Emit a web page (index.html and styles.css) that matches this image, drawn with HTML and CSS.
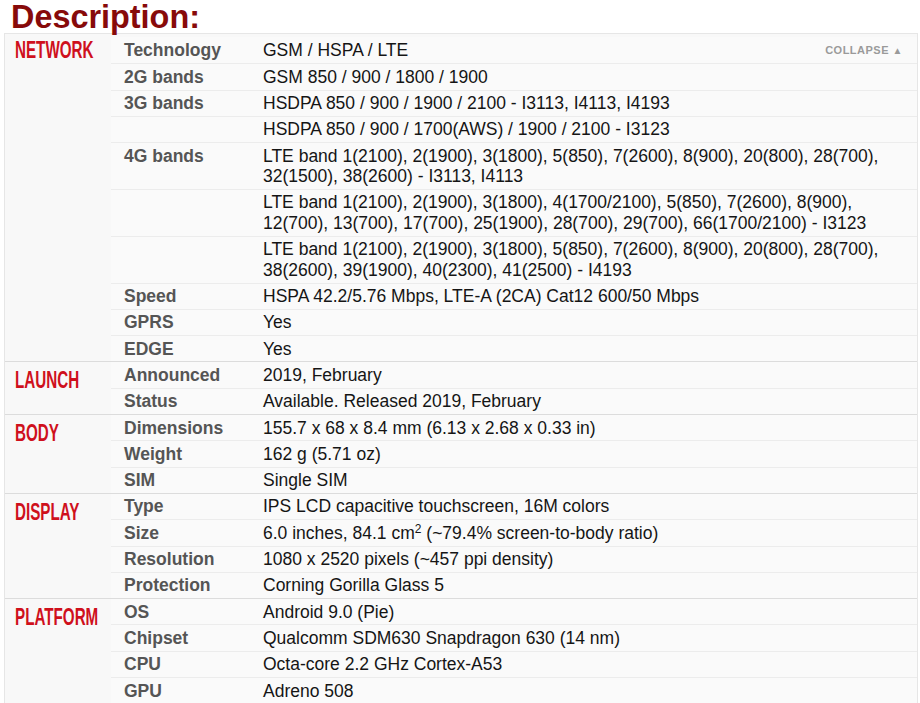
FILE: index.html
```html
<!DOCTYPE html>
<html>
<head>
<meta charset="utf-8">
<link rel="stylesheet" href="styles.css">
</head>
<body>
<h1 class="title">Description:</h1>
<div class="specs">
  <div class="group">
    <div class="group-name"><span>NETWORK</span></div>
    <div class="rows">
      <div class="row"><div class="label">Technology</div><div class="value">GSM / HSPA / LTE</div><div class="collapse">COLLAPSE <span class="tri">&#9650;</span></div></div>
      <div class="row"><div class="label">2G bands</div><div class="value">GSM 850 / 900 / 1800 / 1900</div></div>
      <div class="row"><div class="label">3G bands</div><div class="value">HSDPA 850 / 900 / 1900 / 2100 - I3113, I4113, I4193</div></div>
      <div class="row"><div class="label"></div><div class="value">HSDPA 850 / 900 / 1700(AWS) / 1900 / 2100 - I3123</div></div>
      <div class="row"><div class="label">4G bands</div><div class="value">LTE band 1(2100), 2(1900), 3(1800), 5(850), 7(2600), 8(900), 20(800), 28(700), 32(1500), 38(2600) - I3113, I4113</div></div>
      <div class="row"><div class="label"></div><div class="value">LTE band 1(2100), 2(1900), 3(1800), 4(1700/2100), 5(850), 7(2600), 8(900), 12(700), 13(700), 17(700), 25(1900), 28(700), 29(700), 66(1700/2100) - I3123</div></div>
      <div class="row"><div class="label"></div><div class="value">LTE band 1(2100), 2(1900), 3(1800), 5(850), 7(2600), 8(900), 20(800), 28(700), 38(2600), 39(1900), 40(2300), 41(2500) - I4193</div></div>
      <div class="row"><div class="label">Speed</div><div class="value">HSPA 42.2/5.76 Mbps, LTE-A (2CA) Cat12 600/50 Mbps</div></div>
      <div class="row"><div class="label">GPRS</div><div class="value">Yes</div></div>
      <div class="row"><div class="label">EDGE</div><div class="value">Yes</div></div>
    </div>
  </div>
  <div class="group">
    <div class="group-name"><span>LAUNCH</span></div>
    <div class="rows">
      <div class="row"><div class="label">Announced</div><div class="value">2019, February</div></div>
      <div class="row"><div class="label">Status</div><div class="value">Available. Released 2019, February</div></div>
    </div>
  </div>
  <div class="group">
    <div class="group-name"><span>BODY</span></div>
    <div class="rows">
      <div class="row"><div class="label">Dimensions</div><div class="value">155.7 x 68 x 8.4 mm (6.13 x 2.68 x 0.33 in)</div></div>
      <div class="row"><div class="label">Weight</div><div class="value">162 g (5.71 oz)</div></div>
      <div class="row"><div class="label">SIM</div><div class="value">Single SIM</div></div>
    </div>
  </div>
  <div class="group">
    <div class="group-name"><span>DISPLAY</span></div>
    <div class="rows">
      <div class="row"><div class="label">Type</div><div class="value">IPS LCD capacitive touchscreen, 16M colors</div></div>
      <div class="row"><div class="label">Size</div><div class="value">6.0 inches, 84.1 cm<sup>2</sup> (~79.4% screen-to-body ratio)</div></div>
      <div class="row"><div class="label">Resolution</div><div class="value">1080 x 2520 pixels (~457 ppi density)</div></div>
      <div class="row"><div class="label">Protection</div><div class="value">Corning Gorilla Glass 5</div></div>
    </div>
  </div>
  <div class="group">
    <div class="group-name"><span>PLATFORM</span></div>
    <div class="rows">
      <div class="row"><div class="label">OS</div><div class="value">Android 9.0 (Pie)</div></div>
      <div class="row"><div class="label">Chipset</div><div class="value">Qualcomm SDM630 Snapdragon 630 (14 nm)</div></div>
      <div class="row"><div class="label">CPU</div><div class="value">Octa-core 2.2 GHz Cortex-A53</div></div>
      <div class="row"><div class="label">GPU</div><div class="value">Adreno 508</div></div>
    </div>
  </div>
</div>
</body>
</html>
```
FILE: styles.css
```css
html, body {
  margin: 0;
  padding: 0;
  background: #ffffff;
}
body {
  font-family: "Liberation Sans", Arial, sans-serif;
  width: 920px;
  height: 703px;
  overflow: hidden;
}
.title {
  margin: 0;
  padding: 0 0 0 11px;
  height: 33px;
  font-size: 32.4px;
  line-height: 34px;
  font-weight: bold;
  color: #870a0a;
}
.specs {
  margin-left: 4px;
  width: 912px;
  border: 1px solid #e6e6e6;
  border-bottom: none;
  background: #f8f8f8;
  padding-top: 3px;
}
.group {
  display: flex;
  border-bottom: 1px solid #dcdcdc;
}
.group-name {
  width: 106px;
  flex: none;
  padding: 8px 0 0 10px;
  box-sizing: border-box;
  overflow: visible;
}
.group:first-child .group-name {
  padding-top: 2.5px;
}
.group-name span {
  display: inline-block;
  font-family: "Liberation Sans", Arial, sans-serif;
  font-weight: bold;
  font-size: 24.5px;
  line-height: 20px;
  color: #cf101c;
  white-space: nowrap;
  transform: scaleX(0.62);
  transform-origin: 0 0;
}
.rows {
  flex: 1;
}
.row {
  display: flex;
  font-size: 17.5px;
  line-height: 20.5px;
  padding: 2.5px 0 2.3px 0;
  border-bottom: 1px solid #ececec;
  background: #fafafa;
}
.row:last-child {
  border-bottom: none;
}
.label {
  width: 152px;
  flex: none;
  box-sizing: border-box;
  padding-left: 13px;
  font-weight: bold;
  color: #555555;
}
.value {
  flex: 1;
  color: #151515;
  padding-right: 10px;
}
.value sup {
  font-size: 12px;
  line-height: 0;
  vertical-align: 6px;
}
.collapse {
  flex: none;
  font-size: 11px;
  font-weight: bold;
  letter-spacing: 0.5px;
  color: #9a9a9a;
  padding-right: 14px;
  align-self: center;
}
.tri {
  font-size: 10px;
}
```
